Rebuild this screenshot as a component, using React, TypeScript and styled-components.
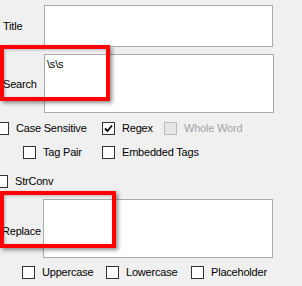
import * as React from "react";
import styled, { createGlobalStyle } from "styled-components";

const GlobalStyle = createGlobalStyle`
  html, body {
    margin: 0;
    padding: 0;
    background: #f0f0f0;
  }
  body {
    font-family: "Liberation Sans", Arial, sans-serif;
    font-size: 11px;
    letter-spacing: -0.2px;
    color: #000;
  }
`;

const Form = styled.div`
  position: relative;
  width: 302px;
  height: 286px;
  overflow: hidden;
  padding-top: 5px;
  box-sizing: border-box;
  background: #f0f0f0;
`;

const FieldRow = styled.div<{ $mt?: number }>`
  display: flex;
  align-items: center;
  margin-top: ${({ $mt }) => $mt ?? 0}px;
`;

const FieldLabel = styled.div<{ $w: number; $pl?: number; $dy?: number }>`
  width: ${({ $w }) => $w}px;
  padding-left: ${({ $pl }) => $pl ?? 2}px;
  box-sizing: border-box;
  position: relative;
  top: ${({ $dy }) => $dy ?? 0}px;
`;

const TextBox = styled.div<{ $w: number; $h: number }>`
  width: ${({ $w }) => $w}px;
  height: ${({ $h }) => $h}px;
  box-sizing: border-box;
  border: 1px solid #ababab;
  background: #fff;
  padding: 3px 0 0 2px;
  line-height: 13px;
`;

const CheckRow = styled.div<{ $mt: number; $ml: number }>`
  display: flex;
  align-items: center;
  height: 13px;
  margin-top: ${({ $mt }) => $mt}px;
  margin-left: ${({ $ml }) => $ml}px;
`;

const CheckItem = styled.label<{ $w?: number; $disabled?: boolean }>`
  display: flex;
  align-items: center;
  gap: 7px;
  width: ${({ $w }) => ($w ? `${$w}px` : "auto")};
  flex-shrink: 0;
  color: ${({ $disabled }) => ($disabled ? "#a2a2a2" : "#000")};
  white-space: nowrap;
  line-height: 13px;
`;

const Box = styled.span<{ $disabled?: boolean }>`
  width: 13px;
  height: 13px;
  box-sizing: border-box;
  border: 1px solid ${({ $disabled }) => ($disabled ? "#bcbcbc" : "#333")};
  background: ${({ $disabled }) => ($disabled ? "#e6e6e6" : "#fff")};
  display: flex;
  align-items: center;
  justify-content: center;
  flex-shrink: 0;
`;

const Highlight = styled.div<{ $x: number; $y: number; $w: number; $h: number }>`
  position: absolute;
  left: ${({ $x }) => $x}px;
  top: ${({ $y }) => $y}px;
  width: ${({ $w }) => $w}px;
  height: ${({ $h }) => $h}px;
  box-sizing: border-box;
  border: 4px solid #ff0000;
  box-shadow: 2px 2px 4px rgba(0, 0, 0, 0.45), inset 1px 1px 3px rgba(0, 0, 0, 0.25);
  pointer-events: none;
`;

function Check({
  label,
  w,
  checked,
  disabled,
}: {
  label: string;
  w?: number;
  checked?: boolean;
  disabled?: boolean;
}) {
  return (
    <CheckItem $w={w} $disabled={disabled}>
      <Box $disabled={disabled}>
        {checked && (
          <svg width="9" height="9" viewBox="0 0 9 9">
            <path d="M1 4.5 L3.5 7 L8 1.5" fill="none" stroke="#000" strokeWidth="1.8" />
          </svg>
        )}
      </Box>
      {label}
    </CheckItem>
  );
}

export default function App() {
  return (
    <Form>
      <GlobalStyle />
      <FieldRow>
        <FieldLabel $w={44} $pl={3}>Title</FieldLabel>
        <TextBox $w={229} $h={42} />
      </FieldRow>
      <FieldRow $mt={7}>
        <FieldLabel $w={44} $pl={3}>Search</FieldLabel>
        <TextBox $w={230} $h={59}>\s\s</TextBox>
      </FieldRow>

      <CheckRow $mt={9} $ml={-4}>
        <Check label="Case Sensitive" w={106} />
        <Check label="Regex" checked w={62} />
        <Check label="Whole Word" disabled />
      </CheckRow>
      <CheckRow $mt={11} $ml={23}>
        <Check label="Tag Pair" w={79} />
        <Check label="Embedded Tags" />
      </CheckRow>
      <CheckRow $mt={16} $ml={-5}>
        <Check label="StrConv" />
      </CheckRow>

      <FieldRow $mt={11}>
        <FieldLabel $w={43} $pl={2} $dy={2}>Replace</FieldLabel>
        <TextBox $w={230} $h={59} />
      </FieldRow>
      <CheckRow $mt={8} $ml={22}>
        <Check label="Uppercase" w={84} />
        <Check label="Lowercase" w={85} />
        <Check label="Placeholder" />
      </CheckRow>

      <Highlight $x={0} $y={45} $w={110} $h={56} />
      <Highlight $x={0} $y={191} $w={116} $h={57} />
    </Form>
  );
}
